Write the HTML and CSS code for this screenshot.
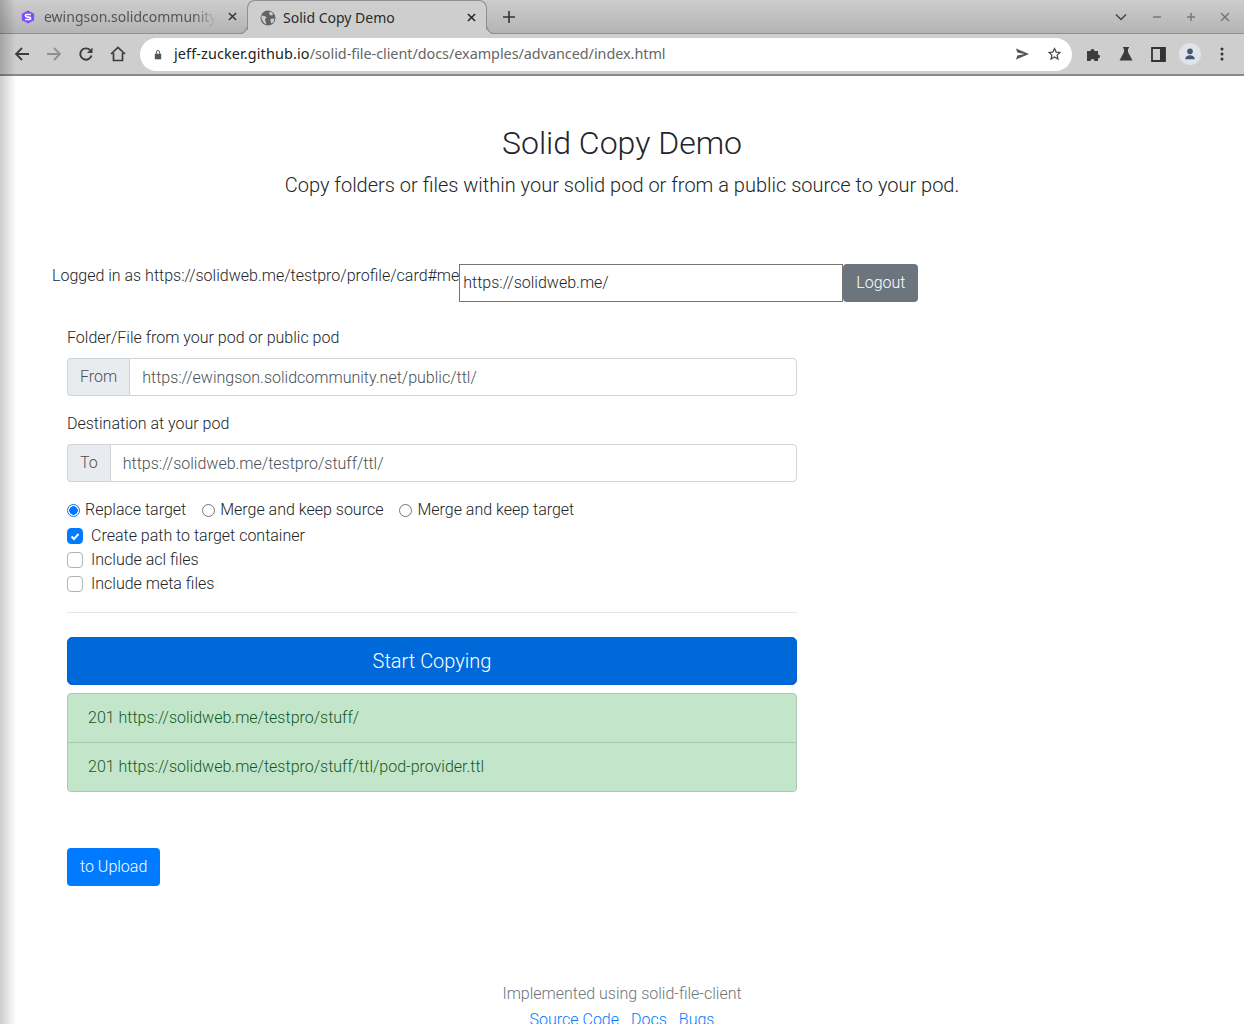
FILE: index.html
```html
<!DOCTYPE html>
<html lang="en">
<head>
    <meta charset="UTF-8">
    <title>Solid Copy Demo</title>
    <link rel="stylesheet" href="styles.css">
</head>
<body>
    <div class="tabstrip">
        <div class="tab tabInactive">
            <svg class="favicon" viewBox="0 0 16 16"><path d="M8 .5l7 3.700v7.600L8 15.500l-7-3.700V4.200z" fill="#7c4dff"/><path d="M4.800 10.800h5c1.600 0 1.600-2.200 0-2.400l-3.600-.8c-1.600-.3-1.600-2.400 0-2.400h5" fill="none" stroke="#fff" stroke-width="1.800"/></svg>
            <span class="tabTitle fadeTitle">ewingson.solidcommunity</span>
            <svg class="tabClose" viewBox="0 0 10 10"><path d="M1 1l8 8M9 1l-8 8" stroke="#333" stroke-width="1.600"/></svg>
        </div>
        <div class="tab tabActive">
            <svg class="favicon" viewBox="0 0 16 16"><circle cx="8" cy="8" r="7.500" fill="#5f6368"/><path d="M1.500 5.500L5 6l1.500 2-1.500 1 .5 2.500 1 3-2.500-1.500-2.500-4zM10 1.500l2.500 1.500.5 2-2.500.5-1.500-2zM10.500 9l4-.5-1 3.500-2 1.500-1-2z" fill="#cecece"/></svg>
            <span class="tabTitle">Solid Copy Demo</span>
            <svg class="tabClose" viewBox="0 0 10 10"><path d="M1 1l8 8M9 1l-8 8" stroke="#222" stroke-width="1.600"/></svg>
        </div>
        <svg class="newTab" viewBox="0 0 12 12"><path d="M6 0v12M0 6h12" stroke="#333" stroke-width="1.600"/></svg>
        <div class="windowBtns">
            <svg class="winIcon" viewBox="0 0 12 12"><path d="M1 3.500l5 5 5-5" fill="none" stroke="#444" stroke-width="1.500"/></svg>
            <svg class="winIcon" viewBox="0 0 12 12"><path d="M2 6h8" stroke="#777" stroke-width="1.500"/></svg>
            <svg class="winIcon" viewBox="0 0 12 12"><path d="M2 6h8M6 2v8" stroke="#777" stroke-width="1.500"/></svg>
            <svg class="winIcon" viewBox="0 0 12 12"><path d="M2 2l8 8M10 2l-8 8" stroke="#777" stroke-width="1.500"/></svg>
        </div>
    </div>
    <div class="toolbar">
        <svg class="navIcon" viewBox="0 0 16 16"><path d="M15 8H2M8 2L2 8l6 6" fill="none" stroke="#3c3c3c" stroke-width="1.800"/></svg>
        <svg class="navIcon" viewBox="0 0 16 16"><path d="M1 8h13M8 2l6 6-6 6" fill="none" stroke="#8f8f8f" stroke-width="1.800"/></svg>
        <svg class="navIcon" viewBox="0 0 16 16"><path d="M13.500 9.500A5.700 5.700 0 1 1 12 4" fill="none" stroke="#3c3c3c" stroke-width="1.900"/><path d="M14.500 1.500v5.500H9z" fill="#3c3c3c"/></svg>
        <svg class="navIcon homeIcon" viewBox="0 0 16 16"><path d="M1 8l7-6.500L15 8M3.500 7v7.500h9V7" fill="none" stroke="#3c3c3c" stroke-width="1.700"/></svg>
        <div class="omnibox">
            <svg class="lock" viewBox="0 0 10 12"><path d="M1 5h8v7H1z" fill="#555"/><path d="M3 5V3a2 2 0 0 1 4 0v2" fill="none" stroke="#555" stroke-width="1.200"/></svg>
            <span class="url"><span class="urlHost">jeff-zucker.github.io</span><span class="urlPath">/solid-file-client/docs/examples/advanced/index.html</span></span>
            <svg class="omniIcon" viewBox="0 0 16 14"><path d="M1 1l14 6-14 6 1.500-4.500L10 7l-7.500-1.500z" fill="#555"/></svg>
            <svg class="omniIcon" viewBox="0 0 16 16"><path d="M8 1.800l1.900 4 4.300.5-3.200 3 .9 4.400L8 11.500l-3.900 2.200.9-4.400-3.200-3 4.300-.5z" fill="none" stroke="#444" stroke-width="1.400"/></svg>
        </div>
        <div class="extIcons">
            <svg class="navIcon" viewBox="0 0 16 16"><path d="M1 5h3.500a2 2 0 1 1 4 0H12v3.500a2 2 0 1 1 0 4V15H8.500a2 2 0 1 0-4 0H1z" fill="#3c3c3c"/></svg>
            <svg class="navIcon" viewBox="0 0 16 16"><path d="M5 1h6v1.500h-1v3.500l4.500 8.500H1.500L6 6V2.500H5z" fill="#3c3c3c"/></svg>
            <svg class="navIcon" viewBox="0 0 16 16"><path d="M2 2h13v13H2z" fill="none" stroke="#333" stroke-width="1.800"/><path d="M10 2h5v13h-5z" fill="#333"/></svg>
            <div class="avatar"><svg viewBox="0 0 16 16"><circle cx="8" cy="5" r="3.200" fill="#47566f"/><path d="M2.500 14c0-6 11-6 11 0z" fill="#47566f"/></svg></div>
            <svg class="navIcon" viewBox="0 0 16 16"><circle cx="8" cy="3" r="1.500" fill="#333"/><circle cx="8" cy="8" r="1.500" fill="#333"/><circle cx="8" cy="13" r="1.500" fill="#333"/></svg>
        </div>
    </div>

    <div class="page">
        <header class="pageHead">
            <h1>Solid Copy Demo</h1>
            <p class="lead">Copy folders or files within your solid pod or from a public source to your pod.</p>
        </header>

        <div class="loginRow">
            <span class="loginText">Logged in as https://solidweb.me/testpro/profile/card#me</span>
            <input class="idpInput" type="text" value="https://solidweb.me/">
            <button class="btn btnGrey">Logout</button>
        </div>

        <div class="mainCol">
            <label class="fieldLabel">Folder/File from your pod or public pod</label>
            <div class="inputGroup">
                <span class="groupText">From</span>
                <input class="groupInput" type="text" value="https://ewingson.solidcommunity.net/public/ttl/">
            </div>
            <label class="fieldLabel">Destination at your pod</label>
            <div class="inputGroup">
                <span class="groupText">To</span>
                <input class="groupInput" type="text" value="https://solidweb.me/testpro/stuff/ttl/">
            </div>

            <div class="radioRow">
                <span class="radioItem"><span class="radio radioOn"></span>Replace target</span>
                <span class="radioItem"><span class="radio"></span>Merge and keep source</span>
                <span class="radioItem"><span class="radio"></span>Merge and keep target</span>
            </div>
            <div class="checkRow"><span class="check checkOn"><svg viewBox="0 0 14 14"><path d="M3.500 7.500l2.500 2.500 4.500-5" fill="none" stroke="#fff" stroke-width="2"/></svg></span>Create path to target container</div>
            <div class="checkRow"><span class="check"></span>Include acl files</div>
            <div class="checkRow"><span class="check"></span>Include meta files</div>

            <hr class="rule">
            <button class="startBtn">Start Copying</button>

            <ul class="results">
                <li>201 https://solidweb.me/testpro/stuff/</li>
                <li>201 https://solidweb.me/testpro/stuff/ttl/pod-provider.ttl</li>
            </ul>

            <button class="btn btnBlue">to Upload</button>
        </div>

        <footer class="pageFoot">
            <div>Implemented using solid-file-client</div>
            <div class="footLinks"><a href="#">Source Code</a><a href="#">Docs</a><a href="#">Bugs</a></div>
        </footer>
    </div>
    <div class="edgeShade"></div>
</body>
</html>
```

FILE: styles.css
```css
html, body {
    margin: 0;
    height: 1024px;
    overflow: hidden;
}
body {
    position: relative;
    font-family: Roboto, sans-serif;
    font-weight: 300;
    font-size: 16px;
    line-height: 24px;
    color: #212529;
    background: #fff;
}

/* browser chrome */
.tabstrip {
    height: 33px;
    display: flex;
    align-items: flex-start;
    padding-left: 8px;
    background: linear-gradient(#cdcdcd, #b4b4b4);
    border-bottom: 1px solid #8f8f8f;
    font-family: "Noto Sans", sans-serif;
    font-weight: 400;
    font-size: 14px;
}
.tab {
    height: 33px;
    display: flex;
    align-items: center;
    box-sizing: border-box;
    padding: 0 10px 0 12px;
    color: #333;
}
.tabInactive {
    width: 239px;
    padding-left: 13px;
    color: #555;
}
.tabActive {
    position: relative;
    width: 240px;
    height: 34px;
    background: #cecece;
    border: 1px solid #8f8f8f;
    border-bottom: none;
    border-radius: 8px 8px 0 0;
    color: #2a2a2a;
}
.tabActive::before,
.tabActive::after {
    content: "";
    position: absolute;
    bottom: 0;
    width: 6px;
    height: 6px;
    border-bottom: 1px solid #8f8f8f;
}
.tabActive::before {
    left: -8px;
    border-right: 1px solid #8f8f8f;
    border-bottom-right-radius: 7px;
    box-shadow: 3px 3px 0 #cecece;
}
.tabActive::after {
    right: -8px;
    border-left: 1px solid #8f8f8f;
    border-bottom-left-radius: 7px;
    box-shadow: -3px 3px 0 #cecece;
}
.favicon {
    width: 16px;
    height: 16px;
    flex: none;
    margin-right: 7px;
}
.tabInactive .favicon {
    width: 14px;
    height: 14px;
    margin-right: 9px;
}
.tabTitle {
    flex: 1;
    overflow: hidden;
    white-space: nowrap;
}
.fadeTitle {
    -webkit-mask-image: linear-gradient(to right, #000 85%, transparent 98%);
    mask-image: linear-gradient(to right, #000 85%, transparent 98%);
}
.tabClose {
    width: 9px;
    height: 9px;
    flex: none;
    margin-left: 8px;
}
.newTab {
    width: 12px;
    height: 12px;
    margin: 11px 0 0 16px;
}
.windowBtns {
    margin-left: auto;
    height: 33px;
    display: flex;
    align-items: center;
    gap: 22px;
    padding-right: 13px;
}
.winIcon {
    width: 12px;
    height: 12px;
}
.winIcon:first-child {
    margin-right: 2px;
}
.toolbar {
    height: 40px;
    display: flex;
    align-items: center;
    padding-left: 14px;
    background: #cecece;
    border-bottom: 2px solid #8a8a8a;
}
.toolbar > .navIcon {
    margin-right: 16px;
}
.toolbar > .homeIcon {
    margin-right: 14px;
}
.navIcon {
    width: 16px;
    height: 16px;
    flex: none;
}
.omnibox {
    width: 932px;
    height: 33px;
    display: flex;
    align-items: center;
    background: #fff;
    border-radius: 17px;
    padding: 0 10px 0 14px;
    box-sizing: border-box;
    font-family: "Noto Sans", sans-serif;
    font-weight: 400;
    font-size: 14.4px;
    color: #222;
}
.lock {
    width: 8px;
    height: 11px;
    margin-right: 12px;
}
.url {
    flex: 1;
}
.urlHost {
    letter-spacing: .13px;
}
.urlPath {
    color: #666;
    letter-spacing: -.04px;
}
.omniIcon {
    width: 15px;
    height: 14px;
    margin-left: 17px;
}
.extIcons {
    display: flex;
    align-items: center;
    gap: 16px;
    margin-left: 14px;
}
.avatar {
    width: 22px;
    height: 22px;
    margin: 0 -3px;
    border-radius: 50%;
    background: #dfe3ea;
    display: flex;
    align-items: center;
    justify-content: center;
}
.avatar svg {
    width: 14px;
    height: 14px;
}
.edgeShade {
    position: absolute;
    left: 0;
    top: 0;
    width: 16px;
    height: 1024px;
    background: linear-gradient(to right, rgba(0,0,0,.2), rgba(0,0,0,0));
    pointer-events: none;
}

/* page */
.pageHead {
    text-align: center;
    padding-top: 47px;
}
h1 {
    margin: 0;
    font-weight: 300;
    font-size: 32px;
    line-height: 40px;
}
.lead {
    margin: 7px 0 0;
    font-size: 20px;
    line-height: 30px;
}
.loginRow {
    display: flex;
    margin: 64px 0 0 52px;
}
.loginText {
    line-height: 24px;
}
.idpInput {
    width: 384px;
    height: 38px;
    box-sizing: border-box;
    padding: 0 3px 2px;
    border: 1px solid #767676;
    font: 300 16px Roboto, sans-serif;
    color: #212529;
    outline: none;
}
.btn {
    height: 38px;
    padding: 0 12px 2px;
    border: 1px solid transparent;
    border-radius: 4px;
    font: 300 16px Roboto, sans-serif;
    color: #fff;
}
.btnGrey {
    background: #6c757d;
}
.btnBlue {
    background: #007bff;
    margin-top: 56px;
}
.mainCol {
    width: 730px;
    margin: 24px 0 0 67px;
}
.fieldLabel {
    display: block;
    margin-bottom: 8px;
}
.inputGroup {
    display: flex;
    height: 38px;
    margin-bottom: 16px;
}
.groupText {
    padding: 0 12px;
    line-height: 36px;
    color: #495057;
    background: #e9ecef;
    border: 1px solid #ced4da;
    border-right: none;
    border-radius: 4px 0 0 4px;
}
.groupInput {
    flex: 1;
    min-width: 0;
    padding: 0 12px;
    border: 1px solid #ced4da;
    border-radius: 0 4px 4px 0;
    font: 300 16px Roboto, sans-serif;
    color: #495057;
    outline: none;
}
.radioRow {
    display: flex;
    height: 24px;
    margin-top: 16px;
}
.radioItem {
    display: flex;
    align-items: center;
    margin-right: 16px;
}
.radio {
    width: 13px;
    height: 13px;
    box-sizing: border-box;
    margin: 0 5px 0 0;
    border: 1px solid #767676;
    border-radius: 50%;
}
.radioOn {
    border: 1px solid #0075ff;
    background: radial-gradient(circle, #0075ff 0 4px, #fff 4.500px);
}
.checkRow {
    display: flex;
    align-items: center;
    height: 24px;
}
.radioRow + .checkRow {
    margin-top: 2px;
}
.check {
    width: 16px;
    height: 16px;
    box-sizing: border-box;
    margin-right: 8px;
    background: #fff;
    border: 1px solid #adb5bd;
    border-radius: 4px;
}
.checkOn {
    background: #007bff;
    border-color: #007bff;
}
.checkOn svg {
    display: block;
}
.rule {
    border: none;
    border-top: 1px solid rgba(0,0,0,.1);
    margin: 16px 0 24px;
}
.startBtn {
    display: block;
    width: 100%;
    height: 48px;
    border: 1px solid #0062cc;
    border-radius: 5px;
    background: #0069d9;
    color: #fff;
    font: 300 20px Roboto, sans-serif;
}
.results {
    list-style: none;
    margin: 8px 0 0;
    padding: 0;
    border: 1px solid #abc9b2;
    border-radius: 4px;
    background: #c3e6cb;
    color: #155724;
}
.results li {
    padding: 12px 20px;
}
.results li + li {
    border-top: 1px solid #abc9b2;
}
.pageFoot {
    position: absolute;
    left: 0;
    right: 0;
    top: 982px;
    text-align: center;
    color: #6c757d;
}
.footLinks {
    margin-top: 2px;
}
.footLinks a {
    color: #007bff;
    text-decoration: none;
    margin: 0 6px;
}
```
